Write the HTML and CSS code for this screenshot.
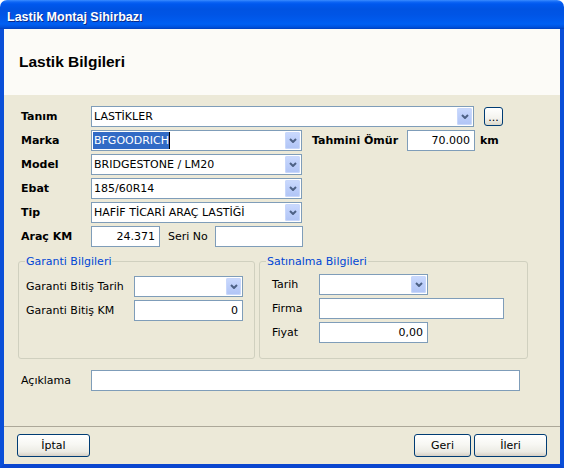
FILE: index.html
```html
<!DOCTYPE html>
<html lang="tr">
<head>
<meta charset="utf-8">
<title>Lastik Montaj Sihirbazı</title>
<link rel="stylesheet" href="styles.css">
</head>
<body>
<div class="window">
  <div class="titlebar"><span>Lastik Montaj Sihirbazı</span></div>
  <div class="frame">
    <div class="header"><h1>Lastik Bilgileri</h1></div>
    <div class="body">
      <div class="form">
        <div class="row">
          <span class="lbl b">Tanım</span>
          <div class="combo w-tanim"><span class="val">LASTİKLER</span><span class="drop"><svg width="8" height="5" viewBox="0 0 8 5"><path d="M1 1 L4 4 L7 1" fill="none" stroke="#4d6185" stroke-width="2"/></svg></span></div>
          <span class="dots">...</span>
        </div>
        <div class="row">
          <span class="lbl b">Marka</span>
          <div class="combo w-std"><span class="val"><span class="sel">BFGOODRICH</span></span><span class="drop"><svg width="8" height="5" viewBox="0 0 8 5"><path d="M1 1 L4 4 L7 1" fill="none" stroke="#4d6185" stroke-width="2"/></svg></span></div>
          <span class="b lbl-omur">Tahmini Ömür</span>
          <div class="tb num w-omur">70.000</div>
          <span class="b km">km</span>
        </div>
        <div class="row">
          <span class="lbl b">Model</span>
          <div class="combo w-std"><span class="val">BRIDGESTONE / LM20</span><span class="drop"><svg width="8" height="5" viewBox="0 0 8 5"><path d="M1 1 L4 4 L7 1" fill="none" stroke="#4d6185" stroke-width="2"/></svg></span></div>
        </div>
        <div class="row">
          <span class="lbl b">Ebat</span>
          <div class="combo w-std"><span class="val">185/60R14</span><span class="drop"><svg width="8" height="5" viewBox="0 0 8 5"><path d="M1 1 L4 4 L7 1" fill="none" stroke="#4d6185" stroke-width="2"/></svg></span></div>
        </div>
        <div class="row">
          <span class="lbl b">Tip</span>
          <div class="combo w-std"><span class="val">HAFİF TİCARİ ARAÇ LASTİĞİ</span><span class="drop"><svg width="8" height="5" viewBox="0 0 8 5"><path d="M1 1 L4 4 L7 1" fill="none" stroke="#4d6185" stroke-width="2"/></svg></span></div>
        </div>
        <div class="row">
          <span class="lbl b">Araç KM</span>
          <div class="tb num w-km">24.371</div>
          <span class="lbl-seri">Seri No</span>
          <div class="tb w-seri"></div>
        </div>
      </div>

      <div class="groups">
        <fieldset class="grp g1">
          <legend>Garanti Bilgileri</legend>
          <div class="gbody g1body">
            <div class="row">
              <span class="glbl1">Garanti Bitiş Tarih</span>
              <div class="combo w109"><span class="val"></span><span class="drop"><svg width="8" height="5" viewBox="0 0 8 5"><path d="M1 1 L4 4 L7 1" fill="none" stroke="#4d6185" stroke-width="2"/></svg></span></div>
            </div>
            <div class="row">
              <span class="glbl1">Garanti Bitiş KM</span>
              <div class="tb num w109">0</div>
            </div>
          </div>
        </fieldset>
        <fieldset class="grp g2">
          <legend>Satınalma Bilgileri</legend>
          <div class="gbody g2body">
            <div class="row">
              <span class="glbl2">Tarih</span>
              <div class="combo w109"><span class="val"></span><span class="drop"><svg width="8" height="5" viewBox="0 0 8 5"><path d="M1 1 L4 4 L7 1" fill="none" stroke="#4d6185" stroke-width="2"/></svg></span></div>
            </div>
            <div class="row">
              <span class="glbl2">Firma</span>
              <div class="tb w-firma"></div>
            </div>
            <div class="row">
              <span class="glbl2">Fiyat</span>
              <div class="tb num w109">0,00</div>
            </div>
          </div>
        </fieldset>
      </div>

      <div class="row aciklama">
        <span class="lbl">Açıklama</span>
        <div class="tb w-aciklama"></div>
      </div>
    </div>
    <div class="footer">
      <span class="btn w-iptal">İptal</span>
      <span class="spacer"></span>
      <span class="btn w-geri">Geri</span>
      <span class="btn w-ileri">İleri</span>
    </div>
  </div>
</div>
</body>
</html>
```

FILE: styles.css
```css
* { box-sizing: border-box; }
html, body { margin: 0; padding: 0; background: #ffffff; }
body {
  font-family: "DejaVu Sans", Verdana, sans-serif;
  font-size: 11px;
  color: #000000;
}
.window {
  width: 564px;
  height: 468px;
  display: flex;
  flex-direction: column;
}
.titlebar {
  height: 29px;
  flex: none;
  border-radius: 7px 7px 0 0;
  background: linear-gradient(to bottom, #3b8cff 0px, #0e66f5 2px, #0058ee 4px, #0053e2 9px, #0055e6 15px, #005bee 21px, #0060f3 24px, #0052de 27px, #0040bd 29px);
  color: #ffffff;
  font-family: "Liberation Sans", Arial, sans-serif;
  font-weight: bold;
  font-size: 12.5px;
  padding: 4px 0 0 7px;
  display: flex;
  align-items: center;
  text-shadow: 1px 1px 0 #0a2a8a;
}
.frame {
  flex: 1;
  display: flex;
  flex-direction: column;
  border-left: 4px solid #0a4fd8;
  border-right: 4px solid #0a4fd8;
  border-bottom: 4px solid #0a46cf;
  min-height: 0;
}
.header {
  height: 66px;
  flex: none;
  background: #fcfbf7;
  display: flex;
  align-items: center;
  padding-left: 15px;
}
.header h1 {
  margin: 0;
  font-family: "Liberation Sans", Arial, sans-serif;
  font-size: 15.5px;
  font-weight: bold;
}
.body {
  flex: 1;
  background: #ece9d8;
  padding: 11px 0 0 17px;
}
.form {
  display: flex;
  flex-direction: column;
  gap: 3px;
}
.row {
  display: flex;
  align-items: center;
  height: 21px;
}
.b { font-weight: bold; }
.lbl { width: 70px; flex: none; }
.combo {
  height: 21px;
  border: 1px solid #7f9db9;
  background: #ffffff;
  display: flex;
  align-items: center;
  flex: none;
}
.combo .val {
  flex: 1;
  padding-left: 2px;
  white-space: nowrap;
  overflow: hidden;
}
.combo .sel {
  display: inline-block;
  background: #316ac5;
  color: #ffffff;
  line-height: 17px;
  margin-left: -1px;
  padding: 0 0 0 1px;
  border-right: 1px solid #000000;
}
.combo .drop {
  width: 15px;
  height: 17px;
  margin-right: 1px;
  border-radius: 2px;
  background: linear-gradient(to bottom, #cbdafd 0%, #bccefa 50%, #b0c4f5 100%);
  box-shadow: inset 0 0 0 1px #c8d7fb;
  display: flex;
  align-items: center;
  justify-content: center;
  flex: none;
}
.tb {
  height: 21px;
  border: 1px solid #7f9db9;
  background: #ffffff;
  display: flex;
  align-items: center;
  padding: 0 3px;
  flex: none;
}
.num { justify-content: flex-end; padding-right: 4px; }
.w-tanim { width: 383px; }
.w-std { width: 211px; }
.dots {
  width: 19px;
  height: 19px;
  margin-left: 10px;
  border: 1px solid #003c74;
  border-radius: 3px;
  background: linear-gradient(to bottom, #ffffff 0%, #f4f3ee 60%, #dcd8ca 100%);
  display: flex;
  align-items: center;
  justify-content: center;
  padding-top: 2px;
  line-height: 1;
}
.lbl-omur { margin-left: 10px; width: 95px; flex: none; }
.w-omur { width: 68px; }
.km { margin-left: 5px; }
.w-km { width: 69px; }
.lbl-seri { margin-left: 8px; width: 47px; flex: none; }
.w-seri { width: 88px; }

.groups {
  display: flex;
  gap: 4px;
  margin: 8px 0 0 -3px;
}
.grp {
  margin: 0;
  padding: 0;
  min-width: 0;
  height: 104px;
  border: 1px solid #d0d0bf;
  border-radius: 3px;
}
.grp legend {
  margin-left: 6px;
  padding: 0 1px;
  color: #0046d5;
  font-size: 11px;
  line-height: 13px;
}
.g1 { width: 237px; }
.g2 { width: 269px; }
.gbody {
  display: flex;
  flex-direction: column;
  gap: 3px;
}
.g1body { padding: 8px 0 0 7px; }
.g2body { padding: 6px 0 0 12px; }
.glbl1 { width: 108px; flex: none; }
.glbl2 { width: 47px; flex: none; }
.w109 { width: 109px; }
.w-firma { width: 185px; }

.aciklama { margin-top: 11px; }
.w-aciklama { width: 429px; }

.footer {
  height: 38px;
  flex: none;
  background: #ece9d8;
  border-top: 1px solid #aca899;
  display: flex;
  align-items: flex-start;
  padding: 7px 13px 0 13px;
  gap: 3px;
}
.spacer { flex: 1; }
.btn {
  height: 23px;
  border: 1px solid #003c74;
  border-radius: 3px;
  background: linear-gradient(to bottom, #ffffff 0%, #f7f7f3 45%, #ecebe4 80%, #d6d0c5 100%);
  display: flex;
  align-items: center;
  justify-content: center;
  flex: none;
}
.w-iptal { width: 73px; }
.w-geri { width: 57px; }
.w-ileri { width: 73px; }
```
